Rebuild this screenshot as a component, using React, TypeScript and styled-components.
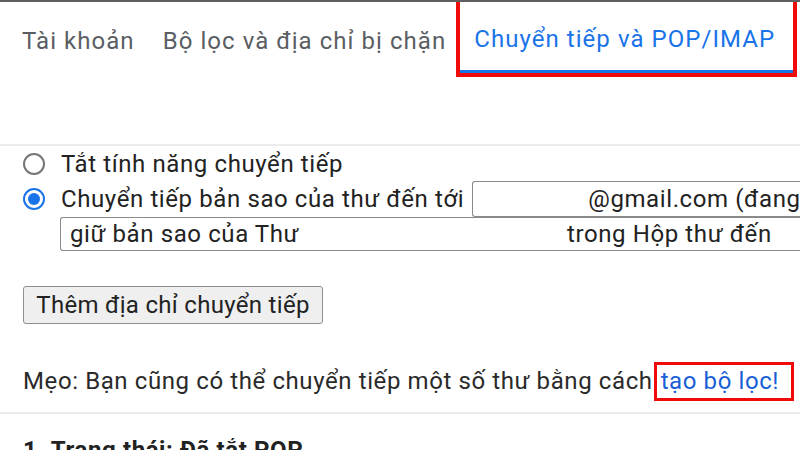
import styled, { createGlobalStyle } from 'styled-components';

const GlobalStyle = createGlobalStyle`
  html, body {
    margin: 0;
    padding: 0;
    background: #fff;
    overflow: hidden;
  }
  body {
    font-family: Roboto, "Liberation Sans", Arial, sans-serif;
    color: #222;
  }
`;

const Page = styled.div`
  width: 800px;
  height: 450px;
  overflow: hidden;
  border-top: 2px solid #5f5f5f;
  box-sizing: border-box;
`;

const TabBar = styled.div`
  display: flex;
  height: 71px;
  padding-left: 8px;
  white-space: nowrap;
`;

const Tab = styled.div<{ $active?: boolean }>`
  display: flex;
  align-items: center;
  padding: 6px 14px 0;
  font-family: Roboto, "Open Sans", sans-serif;
  font-size: 24px;
  letter-spacing: 1.05px;
  color: ${(p) => (p.$active ? '#1a73e8' : '#5a5e63')};
  box-sizing: border-box;
  ${(p) =>
    p.$active &&
    `
    padding-right: 18px;
    border-bottom: 3px solid #1a73e8;
    outline: 4px solid #f00a0a;
    outline-offset: 0;
  `}
`;

const Divider = styled.div<{ $top: number }>`
  height: 2px;
  background: #ebebeb;
  margin-top: ${(p) => p.$top}px;
`;

const Section = styled.div`
  padding-left: 23px;
  font-size: 24px;
  letter-spacing: 0.6px;
  white-space: nowrap;
`;

const Row = styled.div<{ $h: number }>`
  display: flex;
  align-items: center;
  height: ${(p) => p.$h}px;
`;

const Radio = styled.span<{ $checked?: boolean }>`
  position: relative;
  width: 22px;
  height: 22px;
  border-radius: 50%;
  box-sizing: border-box;
  border: 2px solid ${(p) => (p.$checked ? '#1a73e8' : '#767676')};
  margin-right: 16px;
  flex-shrink: 0;
  &::after {
    content: '';
    display: ${(p) => (p.$checked ? 'block' : 'none')};
    position: absolute;
    inset: 3px;
    border-radius: 50%;
    background: #1a73e8;
  }
`;

const Field = styled.div<{ $indent: number }>`
  flex: 1;
  align-self: stretch;
  display: flex;
  align-items: center;
  border: 1px solid #8a8a8a;
  border-right: none;
  border-radius: 3px 0 0 3px;
  padding-left: ${(p) => p.$indent}px;
  color: #222;
  overflow: hidden;
`;

const Part = styled.span<{ $w: number }>`
  display: inline-block;
  width: ${(p) => p.$w}px;
  flex-shrink: 0;
`;

const SelectRow = styled.div`
  display: flex;
  height: 34px;
  margin-left: 37px;
`;

const Button = styled.button`
  margin-top: 35px;
  width: 300px;
  height: 38px;
  font-family: Roboto, "Liberation Sans", sans-serif;
  font-size: 24px;
  letter-spacing: 0.3px;
  color: #222;
  background: #efefef;
  border: 1px solid #8f8f8f;
  border-radius: 3px;
  padding: 0;
  white-space: nowrap;
`;

const Tip = styled.div`
  display: flex;
  align-items: center;
  height: 36px;
  margin-top: 39px;
  color: #2a2a2a;
`;

const Link = styled.a`
  color: #1a5fd6;
  text-decoration: none;
  padding: 2px 12px 3px 4px;
  outline: 3.5px solid #f00a0a;
  margin-left: 4px;
`;

const Heading = styled.div`
  margin-top: 22px;
  font-weight: 700;
  color: #222;
`;

export default function App() {
  return (
    <>
      <GlobalStyle />
      <Page>
        <TabBar>
          <Tab>Tài khoản</Tab>
          <Tab>Bộ lọc và địa chỉ bị chặn</Tab>
          <Tab $active>Chuyển tiếp và POP/IMAP</Tab>
        </TabBar>
        <Divider $top={71} />
        <Section>
          <Row $h={35}>
            <Radio />
            Tắt tính năng chuyển tiếp
          </Row>
          <Row $h={36}>
            <Radio $checked />
            <span>Chuyển tiếp bản sao của thư đến tới</span>
            <Part $w={8} />
            <Field $indent={115}>@gmail.com (đang được sử dụng)</Field>
          </Row>
          <SelectRow>
            <Field $indent={9}>
              <Part $w={497}>giữ bản sao của Thư</Part>
              trong Hộp thư đến
            </Field>
          </SelectRow>
          <Button>Thêm địa chỉ chuyển tiếp</Button>
          <Tip>
            Mẹo: Bạn cũng có thể chuyển tiếp một số thư bằng cách
            <Link href="#">tạo bộ lọc!</Link>
          </Tip>
        </Section>
        <Divider $top={13} />
        <Section>
          <Heading>1. Trạng thái: Đã tắt POP</Heading>
        </Section>
      </Page>
    </>
  );
}
